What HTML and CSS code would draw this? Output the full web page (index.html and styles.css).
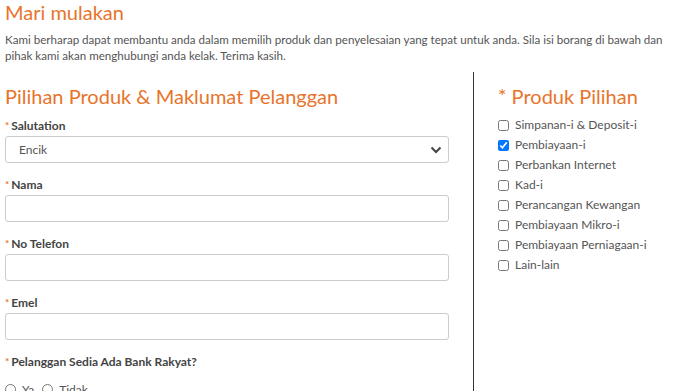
FILE: index.html
```html
<!DOCTYPE html>
<html lang="ms">
<head>
    <meta charset="UTF-8">
    <meta name="viewport" content="width=device-width, initial-scale=1.0">
    <title>Mari mulakan</title>
    <link rel="stylesheet" href="styles.css">
</head>
<body>
    <div class="intro">
        <h1>Mari mulakan</h1>
        <p>Kami berharap dapat membantu anda dalam memilih produk dan penyelesaian yang tepat untuk anda. Sila isi borang di bawah dan pihak kami akan menghubungi anda kelak. Terima kasih.</p>
    </div>

    <div class="form-row">
        <div class="col-main">
            <h2>Pilihan Produk &amp; Maklumat Pelanggan</h2>

            <div class="field">
                <label for="salutation"><span class="req">*</span>Salutation</label>
                <select id="salutation">
                    <option>Encik</option>
                    <option>Puan</option>
                    <option>Cik</option>
                </select>
            </div>

            <div class="field">
                <label for="nama"><span class="req">*</span>Nama</label>
                <input type="text" id="nama">
            </div>

            <div class="field">
                <label for="telefon"><span class="req">*</span>No Telefon</label>
                <input type="text" id="telefon">
            </div>

            <div class="field">
                <label for="emel"><span class="req">*</span>Emel</label>
                <input type="text" id="emel">
            </div>

            <div class="field">
                <label><span class="req">*</span>Pelanggan Sedia Ada Bank Rakyat?</label>
                <div class="radios">
                    <label class="opt"><input type="radio" name="sedia"> Ya</label>
                    <label class="opt"><input type="radio" name="sedia"> Tidak</label>
                </div>
            </div>
        </div>

        <div class="col-side">
            <h2><span class="req">*</span> Produk Pilihan</h2>
            <ul class="products">
                <li><label><input type="checkbox"> Simpanan-i &amp; Deposit-i</label></li>
                <li><label><input type="checkbox" checked> Pembiayaan-i</label></li>
                <li><label><input type="checkbox"> Perbankan Internet</label></li>
                <li><label><input type="checkbox"> Kad-i</label></li>
                <li><label><input type="checkbox"> Perancangan Kewangan</label></li>
                <li><label><input type="checkbox"> Pembiayaan Mikro-i</label></li>
                <li><label><input type="checkbox"> Pembiayaan Perniagaan-i</label></li>
                <li><label><input type="checkbox"> Lain-lain</label></li>
            </ul>
        </div>
    </div>
</body>
</html>
```

FILE: styles.css
```css
body {
    font-family: Lato, "Noto Sans", sans-serif;
    color: #555;
    background-color: #fff;
    margin: 0;
    padding: 0 5px;
    font-size: 12px;
}

h1, h2 {
    color: #e8742c;
    font-weight: normal;
    margin: 0;
}

.intro h1 {
    font-size: 20px;
    line-height: 24px;
}

.intro p {
    margin: 8px 0 0;
    font-size: 11.6px;
    line-height: 16px;
}

.form-row {
    display: grid;
    grid-template-columns: 469px 1fr;
    margin-top: 8px;
}

.col-main {
    padding-right: 24px;
    border-right: 1px solid #333;
}

.col-side {
    padding-left: 24px;
}

h2 {
    font-size: 20px;
    line-height: 26px;
    margin-top: 11px;
    margin-bottom: 9px;
}

.col-side h2 {
    margin-bottom: 6px;
}

.req {
    color: #e8742c;
    font-size: 10px;
    margin-right: 2px;
    vertical-align: top;
    position: relative;
    top: -1px;
}

h2 .req {
    font-size: 20px;
    vertical-align: baseline;
    margin-right: 0;
}

.field {
    margin-bottom: 14px;
}

.field > label {
    display: block;
    font-weight: bold;
    color: #444;
    line-height: 16px;
    margin-bottom: 2px;
}

.field select,
.field input[type="text"] {
    display: block;
    width: 100%;
    height: 27px;
    box-sizing: border-box;
    border: 1px solid #ccc;
    border-radius: 3px;
    background-color: #fff;
    font-family: inherit;
    font-size: 12px;
    color: #555;
    padding: 0 13px;
}

.field select {
    appearance: none;
    background-image: url("data:image/svg+xml;utf8,<svg xmlns='http://www.w3.org/2000/svg' width='12' height='8' viewBox='0 0 12 8'><path d='M1.5 1.5 6 6l4.5-4.5' fill='none' stroke='%23444' stroke-width='2'/></svg>");
    background-repeat: no-repeat;
    background-position: right 6px center;
}

.radios {
    margin-top: 12px;
    display: flex;
    gap: 8px;
}

.opt {
    display: flex;
    align-items: center;
    gap: 6px;
}

.opt input {
    margin: 0;
    width: 11px;
    height: 11px;
}

.products {
    list-style: none;
    margin: 0;
    padding: 0;
}

.products li {
    line-height: 20px;
}

.products label {
    display: flex;
    align-items: center;
    gap: 6px;
    color: #555;
}

.products input {
    margin: 0;
    width: 11px;
    height: 11px;
}
```
